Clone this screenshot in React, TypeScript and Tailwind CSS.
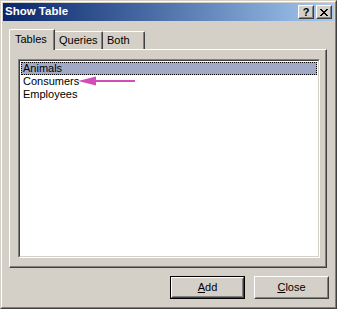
import * as React from 'react';

// classic 3D raised box: outer + inner borders
function Raised({ className = '', innerClassName = '', children }: { className?: string; innerClassName?: string; children?: React.ReactNode }) {
  return (
    <div className={`border border-t-white border-l-white border-r-[#404040] border-b-[#404040] ${className}`}>
      <div className={`h-full w-full border border-t-[#d4d0c8] border-l-[#d4d0c8] border-r-[#808080] border-b-[#808080] ${innerClassName}`}>
        {children}
      </div>
    </div>
  );
}

function TitleButton({ children }: { children: React.ReactNode }) {
  return (
    <Raised className="w-[16px] h-[14px] bg-[#d4d0c8]" innerClassName="flex items-center justify-center">
      {children}
    </Raised>
  );
}

function Tab({ label, width, active = false }: { label: string; width: string; active?: boolean }) {
  if (active) {
    return (
      <div className={`relative z-10 h-[21px] -mb-px bg-[#d4d0c8] border-t border-l border-r border-t-white border-l-white border-r-[#404040] rounded-tl-[2px] ${width}`}>
        <div className="h-full border-r border-r-[#808080] pl-[5px] pt-[3px] leading-[13px]">{label}</div>
      </div>
    );
  }
  return (
    <div className={`h-[18px] bg-[#d4d0c8] border-t border-r border-t-white border-r-[#404040] rounded-tr-[2px] ${width}`}>
      <div className="h-full border-r border-r-[#808080] pl-[4px] pt-[2px] leading-[13px]">{label}</div>
    </div>
  );
}

const items = ['Animals', 'Consumers', 'Employees'];

export default function App() {
  return (
    <div className="w-[337px] h-[309px] bg-[#d4d0c8] border border-t-[#d4d0c8] border-l-[#d4d0c8] border-r-[#404040] border-b-[#404040] text-[11px] text-black font-['Liberation_Sans',Arial,sans-serif] overflow-hidden">
      <div className="h-full border border-t-white border-l-white border-r-[#808080] border-b-[#808080] p-px flex flex-col">
        {/* Title bar */}
        <div className="h-[18px] shrink-0 flex items-center justify-between bg-gradient-to-r from-[#0a246a] to-[#a6caf0] pl-[2px] pr-[2px]">
          <span className="text-white font-bold text-[11.5px] leading-none">Show Table</span>
          <div className="flex gap-[2px]">
            <TitleButton>
              <span className="font-bold text-[11px] leading-none">?</span>
            </TitleButton>
            <TitleButton>
              <svg width="8" height="7" viewBox="0 0 8 7">
                <path d="M0 0h2v1h-2zM1 1h2v1h-2zM6 0h2v1h-2zM5 1h2v1h-2zM2 2h4v1h-4zM3 3h2v1h-2zM2 4h4v1h-4zM1 5h2v1h-2zM5 5h2v1h-2zM0 6h2v1h-2zM6 6h2v1h-2z" fill="#000" />
              </svg>
            </TitleButton>
          </div>
        </div>

        {/* Tabs */}
        <div className="mt-[8px] ml-[6px] mr-[7px] flex flex-col">
          <div className="h-[20px] flex items-end">
            <Tab label="Tables" width="w-[46px]" active />
            <Tab label="Queries" width="w-[48px]" />
            <Tab label="Both" width="w-[42px]" />
          </div>
          <div className="h-[219px] border border-t-white border-l-white border-r-[#404040] border-b-[#404040]">
            <div className="h-full border-r border-b border-r-[#808080] border-b-[#808080] pl-[8px] pt-[9px] pr-[5px] pb-[8px]">
              {/* List box */}
              <div className="relative h-full border border-t-[#808080] border-l-[#808080] border-r-white border-b-white">
                <div className="h-full border border-t-[#404040] border-l-[#404040] border-r-[#d4d0c8] border-b-[#d4d0c8] bg-white pt-px">
                  {items.map((item, i) => (
                    <div
                      key={item}
                      className={
                        i === 0
                          ? 'mx-px h-[13px] leading-[11px] pl-px bg-[#a2a9c6] border border-dotted border-black'
                          : 'mx-px h-[13px] leading-[13px] pl-[2px]'
                      }
                    >
                      {item}
                    </div>
                  ))}
                </div>
                {/* annotation arrow */}
                <svg className="absolute left-[58px] top-[15px]" width="62" height="12" viewBox="0 0 62 12">
                  <path d="M1 6 L19 1.5 L19 10.5 Z" fill="#d44cb6" />
                  <line x1="17" y1="6" x2="58" y2="6" stroke="#d44cb6" strokeWidth="2" />
                </svg>
              </div>
            </div>
          </div>
        </div>

        {/* Buttons */}
        <div className="mt-[8px] mr-[5px] flex justify-end gap-[9px]">
          <div className="border border-black">
            <Raised className="w-[73px] h-[21px] bg-[#d4d0c8]" innerClassName="flex items-center justify-center">
              <span><span className="underline">A</span>dd</span>
            </Raised>
          </div>
          <Raised className="w-[75px] h-[23px] bg-[#d4d0c8]" innerClassName="flex items-center justify-center">
            <span><span className="underline">C</span>lose</span>
          </Raised>
        </div>
      </div>
    </div>
  );
}
